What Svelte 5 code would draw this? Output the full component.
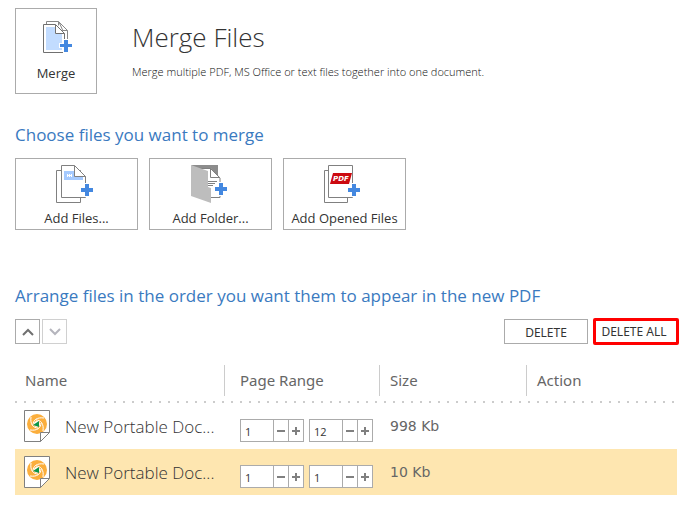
<script>
    let files = $state([
        { id: 1, name: 'New Portable Doc...', from: 1, to: 12, size: '998 Kb', selected: false },
        { id: 2, name: 'New Portable Doc...', from: 1, to: 1, size: '10 Kb', selected: true }
    ]);

    function step(file, key, delta) {
        file[key] = Math.max(1, Number(file[key]) + delta);
    }
</script>

{#snippet plus(x, y)}
    <path d="M{x - 2} {y - 6}h4v4h4v4h-4v4h-4v-4h-4v-4h4z" fill="#4488e0" stroke="#fff" stroke-width="2" paint-order="stroke" />
{/snippet}

{#snippet spinner(file, key, label)}
    <span class="spinner">
        <input type="text" aria-label={label} bind:value={file[key]} />
        <button type="button" aria-label="Decrease {label}" onclick={() => step(file, key, -1)}>
            <svg width="10" height="9"><path d="M1 4h8v2H1z" fill="#808080" /></svg>
        </button>
        <button type="button" aria-label="Increase {label}" onclick={() => step(file, key, 1)}>
            <svg width="10" height="9"><path d="M4 1h2v3h3v2H6v3H4V6H1V4h3z" fill="#808080" /></svg>
        </button>
    </span>
{/snippet}

<main>
    <header>
        <button type="button" class="tile merge">
            <svg width="32" height="34" viewBox="0 0 32 34">
                <path d="M6.5 3V.5H18.500l9 9V18M18.500 .5v4M19 1l4 9M22.500 9.500h5" fill="none" stroke="#888" />
                <path d="M3.500 3.500H15l9.500 9.500v18.500h-21z" fill="#fff" stroke="#707070" />
                <path d="M6 6h9v7h7v16H6z" fill="#c2dcff" />
                <path d="M15.500 3.500v9h9z" fill="#fff" stroke="#707070" />
                <path d="M24 19h4v4h4v3h-4v5h-4v-5h-4v-3h4z" fill="#4488e0" stroke="#fff" stroke-width="2" paint-order="stroke" />
            </svg>
            <span>Merge</span>
        </button>
        <div class="intro">
            <h1>Merge Files</h1>
            <p>Merge multiple PDF, MS Office or text files together into one document.</p>
        </div>
    </header>

    <section class="choose">
        <h2>Choose files you want to merge</h2>
        <div class="tiles">
            <button type="button" class="tile">
                <svg width="42" height="38" viewBox="0 0 42 38">
                    <path d="M.5 5.500h24v32H.5z" fill="#fff" stroke="#808080" />
                    <path d="M5.500 .5H18l11.500 11v21h-24z" fill="#fff" stroke="#808080" />
                    <path d="M8 6h10l7 6h2v3H8z" fill="#a5caff" />
                    <path d="M11 9h1v1h1V9h1v1h1V9h1v3h-1v-1h-1v1h-1v-1h-1v1h-1z" fill="#fff" />
                    <path d="M18.500 .5v11h11z" fill="#fff" stroke="#808080" />
                    {@render plus(31, 25)}
                </svg>
                <span>Add Files...</span>
            </button>
            <button type="button" class="tile">
                <svg width="40" height="38" viewBox="0 0 40 38">
                    <path d="M0 0h27v14H16z" fill="#8c8c8c" />
                    <path d="M8 3.500h12l9 9.500v19.500H17z" fill="#fff" stroke="#808080" />
                    <path d="M19.500 3.500v9h9z" fill="#fff" stroke="#808080" />
                    <path d="M17 16.500h9M17 18.500h7M17 20.500h5" stroke="#808080" />
                    <path d="M0 0l17 6v16l3 1v15L0 31z" fill="#bdbdbd" />
                    {@render plus(30, 24)}
                </svg>
                <span>Add Folder...</span>
            </button>
            <button type="button" class="tile">
                <svg width="42" height="38" viewBox="0 0 42 38">
                    <path d="M.5 5.500h23v32H.5z" fill="#fff" stroke="#808080" />
                    <path d="M4.500 .5h24v32h-24z" fill="#fff" stroke="#808080" />
                    <path d="M9 8h19l-3 11H6z" fill="#cc0a10" />
                    <text x="9" y="16">PDF</text>
                    {@render plus(30, 25)}
                </svg>
                <span>Add Opened Files</span>
            </button>
        </div>
    </section>

    <section class="arrange">
        <h2>Arrange files in the order you want them to appear in the new PDF</h2>
        <div class="toolbar">
            <button type="button" class="move" aria-label="Move up">
                <svg width="12" height="8"><path d="M1 7l5-5 5 5" fill="none" stroke="#707070" stroke-width="2" /></svg>
            </button>
            <button type="button" class="move" aria-label="Move down" disabled>
                <svg width="12" height="8"><path d="M1 1l5 5 5-5" fill="none" stroke="#b5b5bd" stroke-width="2" /></svg>
            </button>
            <button type="button" class="delete">DELETE</button>
            <button type="button" class="delete marked">DELETE ALL</button>
        </div>

        <table>
            <thead>
                <tr>
                    <th class="name"><span>Name</span></th>
                    <th class="range"><span>Page Range</span></th>
                    <th class="size"><span>Size</span></th>
                    <th><span>Action</span></th>
                </tr>
            </thead>
            <tbody>
                {#each files as file (file.id)}
                    <tr class:selected={file.selected}>
                        <td>
                            <div class="file">
                                <svg width="26" height="32" viewBox="0 0 26 32">
                                    <path d="M.5 .5h25V22l-9 9.500H.5z" fill="#fff" stroke="#808080" />
                                    <circle cx="13" cy="14" r="10" fill="#fbae3c" />
                                    {#each [0, 90, 180, 270] as angle}
                                        <path d="M9 15c0-5 4-8 11-7" transform="rotate({angle} 13 14)" fill="none" stroke="#fff" />
                                    {/each}
                                    <circle cx="13" cy="14" r="3" fill="#fff" />
                                    <path d="M9 15l6-4v6z" fill="#0c9447" />
                                    <path d="M16.500 31.500v-9h9z" fill="#fff" stroke="#808080" />
                                </svg>
                                <span>{file.name}</span>
                            </div>
                        </td>
                        <td>
                            <div class="pages">
                                {@render spinner(file, 'from', 'first page')}
                                {@render spinner(file, 'to', 'last page')}
                            </div>
                        </td>
                        <td class="filesize">{file.size}</td>
                        <td></td>
                    </tr>
                {/each}
            </tbody>
        </table>
    </section>
</main>

<style>
    :global(body) {
        margin: 0;
        background: #fff;
    }
    main {
        padding: 8px 11px 12px 15px;
        font-family: "Open Sans", "Noto Sans", sans-serif;
        font-size: 13px;
        color: #333;
    }
    h1, h2, p {
        margin: 0;
    }
    button {
        box-sizing: border-box;
        padding: 0;
        border: 1px solid #ababab;
        background: #fff;
        color: #333;
        font: inherit;
    }
    svg {
        display: block;
        flex: none;
    }
    header {
        display: flex;
        gap: 35px;
    }
    h1 {
        margin-top: 9px;
        font-size: 26px;
        line-height: 40px;
        font-weight: 300;
    }
    p {
        margin-top: 5px;
        font-size: 11px;
        line-height: 20px;
        font-weight: 300;
        color: #111;
    }
    h2 {
        font-size: 17px;
        line-height: 24px;
        font-weight: 400;
        color: #3a7abf;
    }
    .tile {
        display: flex;
        flex-direction: column;
        align-items: center;
        width: 123px;
        height: 72px;
        padding-top: 6px;
        line-height: 20px;
        gap: 5px;
    }
    .tile text {
        font: italic 700 7px "DejaVu Sans", sans-serif;
        fill: #fff;
    }
    .merge {
        width: 82px;
        height: 86px;
        padding-top: 12px;
        gap: 8px;
    }
    .choose {
        margin-top: 29px;
    }
    .tiles {
        display: flex;
        gap: 11px;
        margin-top: 11px;
    }
    .arrange {
        margin-top: 54px;
    }
    .toolbar {
        display: flex;
        align-items: center;
        gap: 2px;
        height: 27px;
        margin-top: 10px;
    }
    .move {
        display: flex;
        align-items: center;
        justify-content: center;
        width: 25px;
        height: 25px;
    }
    .move:disabled {
        border-color: #d0d0d0;
    }
    .delete {
        width: 84px;
        height: 25px;
        margin-left: auto;
        padding-top: 2px;
        font-family: "Noto Sans", sans-serif;
        font-size: 12px;
        line-height: 20px;
    }
    .marked {
        width: 86px;
        height: 27px;
        margin-left: 3px;
        margin-right: -2px;
        padding: 0 4px 0 0;
        border: 3px solid #f00;
        border-radius: 2px;
    }
    table {
        width: 100%;
        margin-top: 20px;
        border-collapse: collapse;
        table-layout: fixed;
    }
    .name {
        width: 209px;
    }
    .range {
        width: 155px;
    }
    .size {
        width: 147px;
    }
    thead {
        background: repeating-linear-gradient(90deg, #ccc 0 2px, transparent 2px 9px) left bottom / 100% 2px no-repeat;
    }
    th {
        padding: 0 0 7px;
        font-family: "Noto Sans", sans-serif;
        font-size: 15px;
        line-height: 31px;
        font-weight: 400;
        text-align: left;
        color: #666;
    }
    th span {
        display: block;
        padding-left: 10px;
        border-left: 1px solid #ccc;
    }
    th.name span {
        border-left: 0;
    }
    th.range span {
        padding-left: 15px;
    }
    td {
        height: 46px;
        padding: 0;
        vertical-align: top;
    }
    .selected {
        background: #fee6b0;
    }
    .file {
        display: flex;
        gap: 15px;
        padding: 7px 0 0 9px;
        font-size: 17px;
        line-height: 34px;
        font-weight: 300;
    }
    .pages {
        display: flex;
        gap: 5px;
        padding: 16px 0 0 16px;
    }
    .spinner {
        display: flex;
        box-sizing: border-box;
        width: 64px;
        height: 23px;
        border: 1px solid #ababab;
        background: #fff;
    }
    .spinner input {
        flex: 1;
        min-width: 0;
        padding: 2px 0 0 4px;
        border: 0;
        background: none;
        font: 11px "Open Sans", sans-serif;
        color: #333;
    }
    .spinner button {
        display: flex;
        align-items: center;
        justify-content: center;
        width: 15px;
        border-width: 0 0 0 1px;
    }
    .filesize {
        padding-left: 11px;
        font-family: "DejaVu Sans", sans-serif;
        font-size: 14px;
        line-height: 46px;
        color: #666;
    }
</style>
